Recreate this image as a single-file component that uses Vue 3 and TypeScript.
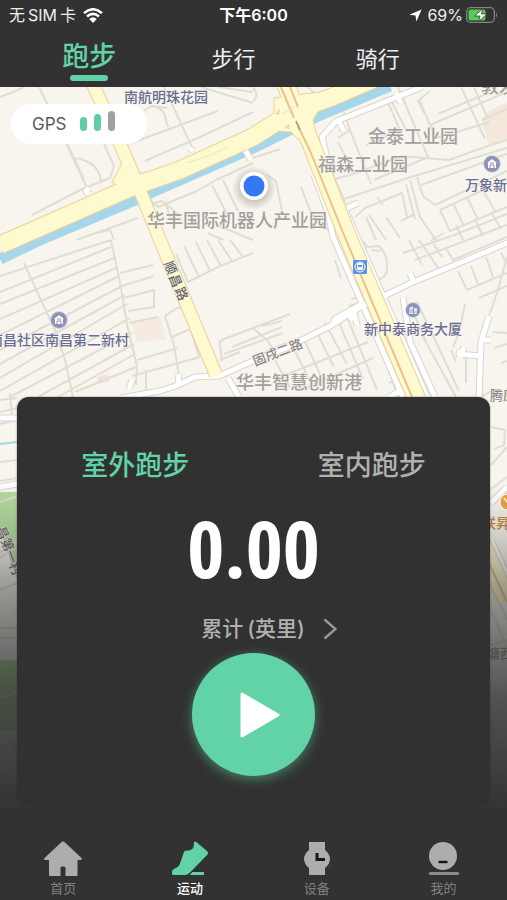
<script setup lang="ts">
import { ref } from 'vue'

interface Label {
  text: string
  x: number
  y: number
  kind: 'area' | 'poi' | 'street' | 'shop'
  rotate?: number
}

const sports = ['跑步', '步行', '骑行']
const activeSport = ref(0)

const modes = ['室外跑步', '室内跑步']
const activeMode = ref(0)

const navItems = [
  { id: 'home', label: '首页' },
  { id: 'sport', label: '运动' },
  { id: 'device', label: '设备' },
  { id: 'mine', label: '我的' },
]
const activeNav = ref('sport')

const labels: Label[] = [
  { text: '南航明珠花园', x: 124, y: 102, kind: 'poi' },
  { text: '敦发', x: 481, y: 93, kind: 'area' },
  { text: '金泰工业园', x: 368, y: 143, kind: 'area' },
  { text: '福森工业园', x: 318, y: 171, kind: 'area' },
  { text: '万象新村', x: 465, y: 190, kind: 'poi' },
  { text: '华丰国际机器人产业园', x: 147, y: 227, kind: 'area' },
  { text: '新中泰商务大厦', x: 364, y: 334, kind: 'poi' },
  { text: '南昌社区南昌第二新村', x: -11, y: 345, kind: 'poi' },
  { text: '华丰智慧创新港', x: 236, y: 389, kind: 'area' },
  { text: '固戌二路', x: 255, y: 366, kind: 'street', rotate: -21 },
  { text: '腾原', x: 490, y: 400, kind: 'street' },
  { text: '联昇', x: 482, y: 528, kind: 'shop' },
  { text: '塘西', x: 487, y: 658, kind: 'street' },
]

const streetChars = [
  { text: '顺', x: 170, y: 268 },
  { text: '昌', x: 175, y: 281 },
  { text: '路', x: 181, y: 294 },
  { text: '昌', x: 2, y: 533 },
  { text: '第', x: 7, y: 545 },
  { text: '一', x: 11, y: 557 },
  { text: '村', x: 15, y: 569 },
]

const lanes = [
  'M0 97L18 90L24 87M39 87L55 120L88 190M67 144L84 179M75 158Q98 161 101 181M32 215L82 189L110 178L114 166L104 144M129 144L218 111M145 161L200 137L253 112M144 111Q154 101 164 113L168 127M164 87L192 147M151 106L167 108M201 87L253 103M218 87L253 92',
  'M0 276L111 240M0 292L111 247M0 304L114 258M0 319L116 268M0 335L119 276M0 350L122 286M0 364L125 295M0 378L127 304M0 391L130 318M10 397L132 333M38 397L134 344M58 397L135 354M75 392L136 367',
  'M24 263L38 294L55 330L65 360L73 397M111 240L120 282L127 325L137 366L136 385M120 273L153 265M122 286L154 276M124 298L154 290L154 307L128 311M129 323L158 317M137 360L178 348M132 376L200 357M146 370V392M10 393V397',
  'M165 316L177 308Q184 306 187 319L199 356M165 316L174 345L179 376M172 337L195 327M176 254L188 282L218 267L253 253M184 246L199 277M196 242L210 271M207 240L221 266M218 240L232 261M230 240L243 257',
  'M147 197L158 207L197 191L216 180L253 163M151 204L162 201L178 214M165 202L171 219M212 185L229 218M223 180L238 211M97 233L110 230L114 240M76 240L138 218M208 233L223 240M217 225L253 240',
  'M222 361L220 344Q219 341 224 339L290 314M224 354L283 333M232 347L282 327M220 360L240 352M248 362L270 350L286 343M253 328L267 340L275 352M262 326L282 321M290 341L312 385M303 337L320 374M315 329L334 367M325 323L347 364M337 318L363 379M347 317L377 390M275 360L290 388M301 390L373 358M283 376L368 342',
  'M253 87Q260 96 253 101M280 87L283 98M308 87L314 93M253 158L280 149M267 175L276 181L282 211M301 187L311 213L337 239M338 138L350 130L371 184M338 142L352 169M350 130L344 112M366 145L400 130L386 98L368 108M390 98L407 132M398 87L428 157L374 180M419 99L430 125L507 92M438 114L491 92M430 125L436 138L490 122M430 91L418 101L424 113',
  'M461 87L485 139M474 87L488 119M482 120L507 109M335 179L350 175L402 156L449 160L485 147L507 140M341 200L411 177L507 148M410 180L420 217L436 240M406 184L415 219M417 177L423 196L435 205L507 171M421 185L507 154M355 217L365 208L402 193L407 217M366 217L376 240M369 215L386 240M377 197L383 205M386 217L400 238M401 221L415 214',
  'M440 210L507 179M440 210L450 231L507 207M453 203L464 226M467 197L478 220M483 190L496 213M432 240L444 233M452 236L507 214M456 225L463 240M475 219L483 236M491 212L501 229M361 240L368 247L379 246Q387 253 387 265Q388 277 378 280L367 284M335 260L341 279M340 260L347 265M371 250L381 251',
  'M409 240L422 265M419 240L439 269M431 240L442 257M403 253L451 236M415 260L507 225M445 247L453 260L507 237M458 271L467 290L507 273M471 266L478 284M486 257L493 277M501 253L507 264M489 316L497 293L507 257M479 298L507 286M465 304L459 333L453 347M466 357V383M451 350L456 362M417 302L437 344L459 391M410 305L427 344M422 335L456 397',
  'M365 302L379 329M351 299L363 296M349 306L359 303M384 347L397 397M388 374L400 369M389 383L405 376M480 397L496 389M493 332L507 333M494 348L507 344M501 363L507 361',
  'M0 400L17 398M0 412L17 408M10 397L12 414M0 424L17 420M0 462L17 460M0 481L17 478M0 502L17 496M491 427L505 430L504 445L494 449M491 465L507 447M491 489L507 477M491 502L507 493M0 553L17 541M0 558L17 547M0 590L17 583M0 628H17M0 638H17M0 730L17 749L0 747M491 610L507 648M491 583L507 620M491 645L507 640M493 704V734M0 698L17 692',
]

const minorRoads = [
  'M121 398L160 391L178 385L195 377L219 376L253 361L286 348L332 325L362 306L386 295L413 282L462 262L507 243',
  'M129 389L132 380M178 384L179 374M228 378L239 397M332 325L335 319L364 303M350 320L354 313L357 325M414 283L410 273',
  'M422 87L347 117L336 121L322 137L325 150L331 177L427 397M396 93L401 103M339 122L344 131M347 208L358 203',
  'M314 175L328 212L333 237M333 237L403 397M403 297L410 342L435 397M489 316L481 342L479 397M480 356L459 354L460 350M460 358L464 347M481 340L491 340',
  'M89 188L86 191L88 194M190 148L193 151M242 145L251 160M389 397L402 390',
  'M0 418H17M0 487L17 484M491 503L507 487M491 540L507 575',
]

const mainRoads = [
  'M0 245L132 187L180 170L253 137L294 111L332 97L374 79',
  'M284 80L298 116L310 141L349 240L416 397L507 600',
]
const sideRoad = 'M91 80L121 146L139 188L160 240L216 375'
</script>

<template>
  <div class="app">
    <header class="top">
      <div class="status">
        <div class="carrier">
          <span>无</span><span>SIM</span><span>卡</span>
          <svg class="wifi" viewBox="0 0 20 15" aria-hidden="true">
            <path d="M1 5.1Q10-2.6 19 5.1M4 8.5Q10 3.3 16 8.5" fill="none" stroke="#fff" stroke-width="2.5" />
            <path d="M6.2 11Q10 7.5 13.8 11L10 15Z" fill="#fff" />
          </svg>
        </div>
        <div class="clock">下午6:00</div>
        <div class="power">
          <svg class="arrow" viewBox="0 0 13 13" aria-hidden="true">
            <path d="M12.6.4L7.4 12.6L6.5 6.6L.3 5.7Z" fill="#fff" />
          </svg>
          <span>69%</span>
          <svg class="battery" viewBox="0 0 32 16" aria-hidden="true">
            <rect x=".7" y=".7" width="27.6" height="14.6" rx="4" fill="none" stroke="#858585" stroke-width="1.3" />
            <path d="M30 5.5Q32 8 30 10.5Z" fill="#858585" />
            <rect x="2.5" y="2.5" width="17" height="11" rx="2" fill="#52cc58" />
            <path d="M17 1.5L8.5 9H14L12.5 14.5L21 7H15.5Z" fill="#fff" stroke="#323232" stroke-width=".8" />
          </svg>
        </div>
      </div>
      <nav class="sports">
        <button
          v-for="(sport, i) in sports"
          :key="sport"
          type="button"
          :class="{ active: activeSport === i }"
          @click="activeSport = i"
        >
          {{ sport }}
        </button>
      </nav>
    </header>

    <main class="stage">
      <svg class="map" viewBox="0 87 507 748" preserveAspectRatio="xMidYMin slice" aria-hidden="true">
        <rect y="87" width="507" height="748" fill="#f8f5ee" />
        <path d="M482 120L488 111L507 103V139L489 146Z" fill="#f4e8dc" />
        <path d="M132 323L161 317L166 340L136 342Z" fill="#f6ebe1" />
        <path d="M97 377L108 374L110 381L99 384Z" fill="#f4dfe3" />
        <path d="M0 492H17V580L0 530Z" fill="#b5dd9f" />
        <rect y="660" width="17" height="70" fill="#a8d890" />
        <path v-for="d in lanes" :key="d" :d="d" class="lane" />
        <path d="M0 259L40 240L133 201L148 194L253 148L316 117L390 86" class="canal" />
        <path d="M0 444L17 442" class="stream" />
        <path v-for="d in minorRoads" :key="d" :d="d" class="minor-case" />
        <path v-for="d in minorRoads" :key="d" :d="d" class="minor" />

        <path v-for="d in mainRoads" :key="d" :d="d" class="main-case" />
        <path :d="sideRoad" class="side-case" />
        <path d="M112 182L122 163L139 174L158 169L149 184L145 204L130 192Z" class="junction" />
        <path d="M264 130L274 115V98L303 94L330 91L313 120L318 139L298 139L291 132Z" class="junction" />
        <path v-for="d in mainRoads" :key="d" :d="d" class="main" />
        <path :d="sideRoad" class="side" />
        <path d="M281 87L294 118M290 87L298 107M298 126L311 153L344 235L412 397L507 602" class="divider" />
        <path d="M275 114L280 108L279 115ZM284 128L289 124L290 129Z" fill="#eed6a4" />
        <path d="M296 121L300 130" stroke="#aaa797" stroke-width="2" />
        <path d="M187 163L208 156L229 147M282 114L294 107" class="lane-mark" />

        <text
          v-for="label in labels"
          :key="label.text"
          :x="label.x"
          :y="label.y"
          :class="['map-label', label.kind]"
          :transform="label.rotate ? `rotate(${label.rotate} ${label.x} ${label.y})` : undefined"
        >{{ label.text }}</text>
        <text
          v-for="c in streetChars"
          :key="`${c.text}${c.y}`"
          :x="c.x"
          :y="c.y + 4"
          text-anchor="middle"
          class="map-label street dark"
          :transform="`rotate(68 ${c.x} ${c.y})`"
        >{{ c.text }}</text>

        <g v-for="p in [[59, 320], [492, 164]]" :key="p[0]" :transform="`translate(${p[0]} ${p[1]})`">
          <circle r="8.5" fill="#8e93b5" stroke="#dcdde5" />
          <path d="M-5-1L0-5L5-1H4V4H-4V-1Z" fill="#fff" />
          <path d="M-2 4V1H2V4M-2-1H2" fill="none" stroke="#8e93b5" />
        </g>
        <g transform="translate(413 310)">
          <circle r="7.5" fill="#8e93b5" stroke="#dcdde5" />
          <path d="M-4-2L0-4V4H-4ZM1-2H4V4H1Z" fill="#dfe6f5" />
          <path d="M-4 0H0M-4 2H4" stroke="#8e93b5" stroke-width=".6" />
        </g>
        <g transform="translate(360 267)">
          <rect x="-7" y="-7" width="14" height="14" rx="1" fill="#5a91ec" />
          <circle r="5" fill="none" stroke="#fff" />
          <rect x="-3" y="-4" width="6" height="7" rx="1.5" fill="#fff" />
          <path d="M-2-2H2V0H-2ZM-2 4L-1 3H1L2 4" fill="#5a91ec" />
        </g>
        <g transform="translate(508 502)">
          <circle r="8" fill="#eda63a" stroke="#fff" />
          <path d="M-4-4L0 1V5M4-4L0 1" fill="none" stroke="#fff" stroke-width="1.5" />
        </g>
        <circle cx="254" cy="188" r="22" fill="url(#halo)" />
        <circle cx="254" cy="186" r="14" fill="#fff" />
        <circle cx="254" cy="186" r="10.5" fill="#3478f6" />
        <defs>
          <radialGradient id="halo">
            <stop offset=".6" stop-color="#8e8b84" stop-opacity=".4" />
            <stop offset="1" stop-color="#8e8b84" stop-opacity="0" />
          </radialGradient>
        </defs>
      </svg>
      <div class="fade"></div>

      <div class="gps">
        <span>GPS</span>
        <div class="bars"><i class="low"></i><i class="mid"></i><i class="high"></i></div>
      </div>

      <section class="panel">
        <div class="modes">
          <button
            v-for="(mode, i) in modes"
            :key="mode"
            type="button"
            :class="{ active: activeMode === i }"
            @click="activeMode = i"
          >
            {{ mode }}
          </button>
        </div>
        <div class="distance">0.00</div>
        <a class="total" href="#total">
          <span>累计</span><span>(英里)</span>
          <svg viewBox="0 0 14 22" aria-hidden="true">
            <path d="M1.5 1.5L12.5 11L1.5 20.5" fill="none" stroke="#989898" stroke-width="2.4" />
          </svg>
        </a>
        <button class="play" type="button" aria-label="开始">
          <svg viewBox="0 0 40 46" aria-hidden="true">
            <path d="M2 2L38 23L2 44Z" fill="#fff" stroke="#fff" stroke-width="3" stroke-linejoin="round" />
          </svg>
        </button>
      </section>
    </main>

    <nav class="bottom">
      <a
        v-for="item in navItems"
        :key="item.id"
        :href="`#${item.id}`"
        :class="{ active: activeNav === item.id }"
        @click="activeNav = item.id"
      >
        <svg viewBox="0 0 38 36" aria-hidden="true">
          <path
            v-if="item.id === 'home'"
            d="M17.8.8Q19 0 20.2.8L37.5 17Q38.5 19 36.5 19H33.5V34Q33.5 35 32.5 35H21.5V27Q21.5 25.5 20 25.5H18Q16.5 25.5 16.5 27V35H6Q5 35 5 34V19H1.5Q-.5 19 .5 17Z"
          />
          <template v-else-if="item.id === 'sport'">
            <path d="M13 11Q13.5 9.3 15 9.5Q18 10 20.5 8.5Q23 7 22.8 4V2Q23 .3 25 .8L36.5 10.5Q37.5 12 36.5 13.5L20 30.5Q16.5 34 14 34H2.5Q1 34 1 32.500V30.500Q1 29 3 28Q8.500 26 9.500 21Z" />
            <path d="M21.500 31H32.500Q33 31 33 32V33.500Q33 34 32 34H20Q18.500 34 19.500 33Z" />
          </template>
          <template v-else-if="item.id === 'device'">
            <path d="M11 1H27V9Q32 13 32 18T27 27V34H11V27Q6 23 6 18T11 9Z" />
            <path d="M19 12V18.5H27" fill="none" stroke="#181818" stroke-width="3" />
          </template>
          <template v-else>
            <circle cx="18" cy="15" r="14" />
            <path d="M13.5 21H22.5" stroke="#181818" stroke-width="2.4" />
            <rect x="4" y="31" width="30" height="3" rx="1" fill="#8c8c8c" />
          </template>
        </svg>
        <span>{{ item.label }}</span>
      </a>
    </nav>
  </div>
</template>

<style>
body {
  margin: 0;
  background: #323232;
}
</style>

<style scoped>
.app {
  display: flex;
  flex-direction: column;
  min-height: 100vh;
  background: #323232;
  color: #eee;
  font-family: Inter, "Noto Sans CJK SC", sans-serif;
}
button {
  padding: 0;
  border: 0;
  background: none;
  color: inherit;
  font: inherit;
  cursor: pointer;
}
a {
  color: inherit;
  text-decoration: none;
}
.status {
  display: grid;
  grid-template-columns: 1fr auto 1fr;
  align-items: center;
  height: 30px;
  padding: 0 9px;
  font-size: 16px;
  line-height: 30px;
}
.carrier,
.power {
  display: flex;
  align-items: center;
  gap: 3px;
}
.wifi {
  width: 20px;
  height: 15px;
  margin-left: 4px;
}
.clock {
  color: #fff;
  font-weight: 600;
}
.power {
  justify-content: flex-end;
}
.arrow {
  width: 13px;
  height: 13px;
  margin-right: 2px;
}
.battery {
  width: 32px;
  height: 16px;
}
.sports {
  display: grid;
  grid-template-columns: repeat(3, 1fr);
  height: 57px;
  padding: 0 57px 0 17px;
}
.sports button {
  display: flex;
  flex-direction: column;
  align-items: center;
  gap: 2px;
  padding-top: 13px;
  font-size: 22px;
  line-height: 32px;
}
.sports .active {
  padding-top: 11px;
  color: #61d3a6;
  font-size: 27px;
  font-weight: 500;
}
.sports .active::after {
  width: 38px;
  height: 6px;
  border-radius: 3px;
  background: #61d3a6;
  content: "";
}
.stage {
  position: relative;
  flex: 1;
  padding: 17px 17px 29px;
  overflow: hidden;
}
.map,
.fade {
  position: absolute;
  inset: 0;
  width: 100%;
  height: 100%;
}
.fade {
  background: linear-gradient(
    rgba(50, 50, 50, 0) 53%,
    rgba(50, 50, 50, 0.2) 60%,
    rgba(50, 50, 50, 0.48) 67%,
    rgba(50, 50, 50, 0.66) 74%,
    rgba(50, 50, 50, 0.84) 82%,
    #323232 97%
  );
}
.lane,
.canal,
.stream,
.minor,
.minor-case,
.main,
.main-case,
.side,
.side-case,
.divider,
.lane-mark {
  fill: none;
  stroke-linejoin: round;
}
.lane {
  stroke: #e0ded3;
  stroke-width: 2px;
}
.canal {
  stroke: #a5d6ea;
  stroke-width: 11px;
}
.stream {
  stroke: #a5d6ea;
  stroke-width: 2px;
}
.minor-case {
  stroke: #d8d6cf;
  stroke-width: 7px;
}
.minor {
  stroke: #fff;
  stroke-width: 5px;
}
.main-case {
  stroke: #f1cf9c;
  stroke-width: 19px;
}
.main {
  stroke: #fefad0;
  stroke-width: 17px;
}
.side-case {
  stroke: #f1cf9c;
  stroke-width: 14px;
}
.side {
  stroke: #fefad0;
  stroke-width: 12px;
}
.junction {
  fill: #fefad0;
  stroke: #f1cf9c;
  stroke-width: 1px;
}
.divider {
  stroke: #edc08c;
  stroke-width: 2px;
}
.lane-mark {
  stroke: #ece5c0;
  stroke-width: 1px;
}
.map-label {
  paint-order: stroke;
  stroke: #f8f5ee;
  stroke-width: 1px;
  font-family: "Noto Sans CJK SC", sans-serif;
  font-weight: 500;
}
.area {
  fill: #a3a19d;
  font-size: 18px;
}
.poi {
  fill: #686d94;
  font-size: 14px;
}
.street {
  fill: #8a8986;
  font-size: 13px;
}
.dark {
  fill: #686764;
}
.shop {
  fill: #c98a3c;
  font-size: 14px;
}
.gps {
  position: relative;
  display: flex;
  align-items: center;
  gap: 14px;
  box-sizing: border-box;
  width: 136px;
  height: 40px;
  margin-left: -6px;
  padding-left: 21px;
  border-radius: 20px;
  background: #fff;
  color: #5a5a5a;
  font-size: 17px;
}
.bars {
  display: flex;
  align-items: flex-end;
  gap: 7px;
  height: 20px;
  margin-bottom: 6px;
}
.bars i {
  width: 7px;
  border-radius: 4px;
  background: #5fcfa3;
}
.bars .low {
  height: 14px;
}
.bars .mid {
  height: 17px;
}
.bars .high {
  height: 20px;
  background: #a0a0a0;
}
.panel {
  position: relative;
  display: flex;
  flex-direction: column;
  align-items: center;
  margin-top: 253px;
  padding: 50px 0 29px;
  border-radius: 12px;
  background: #313131;
  box-shadow: 0 0 2px rgba(40, 40, 40, 0.6);
}
.modes {
  display: grid;
  grid-template-columns: 1fr 1fr;
  width: 100%;
  color: #b0b0b0;
  font-size: 27px;
  font-weight: 500;
  line-height: 38px;
}
.modes .active {
  color: #61d3a6;
}
.distance {
  margin-top: 22px;
  color: #fff;
  font-family: "Noto Sans ExtraCondensed", "Open Sans Condensed", "Roboto Condensed", "Liberation Sans Narrow", sans-serif;
  font-size: 80px;
  font-weight: 500;
  line-height: 80px;
}
.total {
  display: flex;
  align-items: center;
  gap: 4px;
  margin: 26px 0 8px 31px;
  color: #b0b0b0;
  font-size: 21px;
  font-weight: 500;
  line-height: 32px;
}
.total svg {
  width: 14px;
  height: 22px;
  margin-left: 14px;
}
.play {
  display: grid;
  place-items: center;
  width: 123px;
  height: 123px;
  padding-left: 12px;
  border-radius: 50%;
  background: #61d3a6;
  box-shadow: 0 3px 12px rgba(97, 211, 166, 0.5);
}
.play svg {
  width: 40px;
  height: 46px;
}
.bottom {
  display: grid;
  grid-template-columns: repeat(4, 1fr);
  height: 65px;
  color: #808080;
  font-size: 13px;
}
.bottom a {
  display: flex;
  flex-direction: column;
  align-items: center;
  gap: 2px;
  padding-top: 6px;
  line-height: 18px;
}
.bottom svg {
  width: 38px;
  height: 36px;
  fill: #adadad;
}
.bottom .active {
  color: #fff;
  font-weight: 500;
}
.bottom .active svg {
  fill: #61d3a6;
}
</style>
